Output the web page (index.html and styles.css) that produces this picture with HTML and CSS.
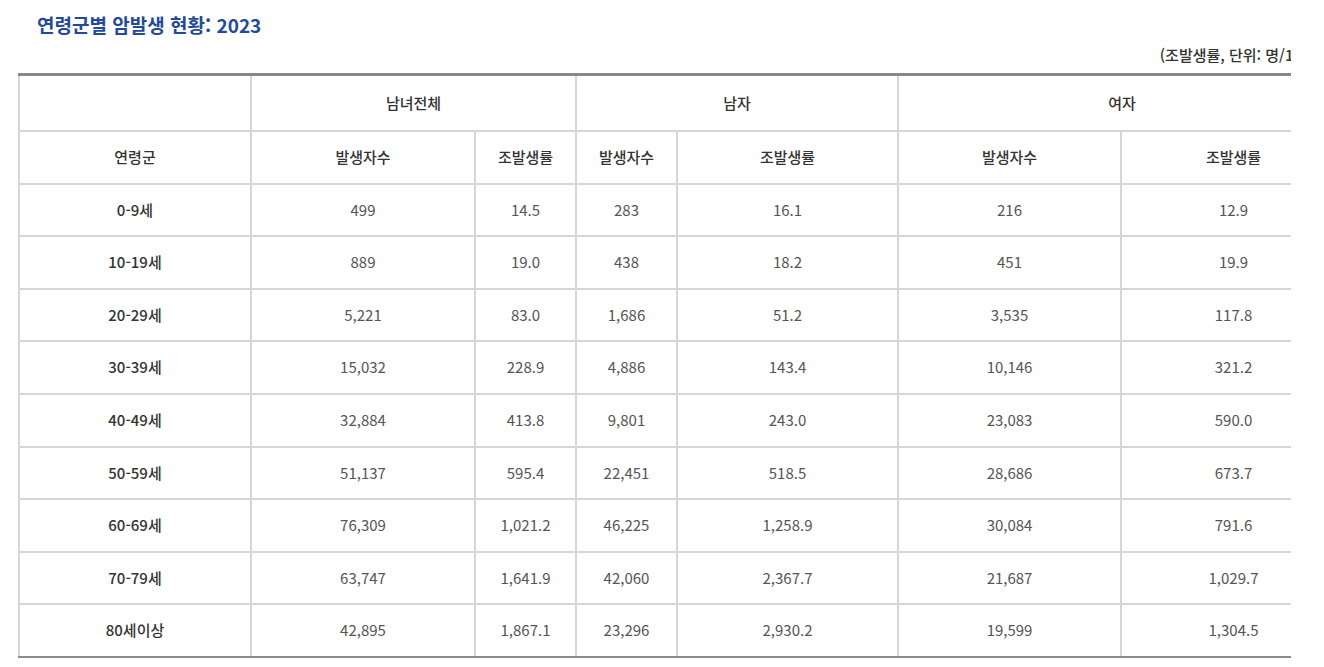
FILE: index.html
```html
<!DOCTYPE html>
<html lang="ko">
<head>
<meta charset="utf-8">
<title>연령군별 암발생 현황: 2023</title>
<link rel="stylesheet" href="styles.css">
</head>
<body>
<div class="frame">
  <div class="inner">
    <h2 class="title">연령군별 암발생 현황: 2023</h2>
    <p class="unit">(조발생률, 단위: 명/10만명)</p>
    <table class="stats">
      <colgroup>
        <col class="c-age"><col class="c-a"><col class="c-b"><col class="c-c"><col class="c-d"><col class="c-e"><col class="c-f">
      </colgroup>
      <thead>
        <tr class="top">
          <th></th>
          <th colspan="2">남녀전체</th>
          <th colspan="2">남자</th>
          <th colspan="2">여자</th>
        </tr>
        <tr>
          <th>연령군</th>
          <th>발생자수</th><th>조발생률</th>
          <th>발생자수</th><th>조발생률</th>
          <th>발생자수</th><th>조발생률</th>
        </tr>
      </thead>
      <tbody>
        <tr><th>0-9세</th><td>499</td><td>14.5</td><td>283</td><td>16.1</td><td>216</td><td>12.9</td></tr>
        <tr><th>10-19세</th><td>889</td><td>19.0</td><td>438</td><td>18.2</td><td>451</td><td>19.9</td></tr>
        <tr><th>20-29세</th><td>5,221</td><td>83.0</td><td>1,686</td><td>51.2</td><td>3,535</td><td>117.8</td></tr>
        <tr><th>30-39세</th><td>15,032</td><td>228.9</td><td>4,886</td><td>143.4</td><td>10,146</td><td>321.2</td></tr>
        <tr><th>40-49세</th><td>32,884</td><td>413.8</td><td>9,801</td><td>243.0</td><td>23,083</td><td>590.0</td></tr>
        <tr><th>50-59세</th><td>51,137</td><td>595.4</td><td>22,451</td><td>518.5</td><td>28,686</td><td>673.7</td></tr>
        <tr><th>60-69세</th><td>76,309</td><td>1,021.2</td><td>46,225</td><td>1,258.9</td><td>30,084</td><td>791.6</td></tr>
        <tr><th>70-79세</th><td>63,747</td><td>1,641.9</td><td>42,060</td><td>2,367.7</td><td>21,687</td><td>1,029.7</td></tr>
        <tr><th>80세이상</th><td>42,895</td><td>1,867.1</td><td>23,296</td><td>2,930.2</td><td>19,599</td><td>1,304.5</td></tr>
      </tbody>
    </table>
  </div>
</div>
</body>
</html>
```
FILE: styles.css
```css
html, body {
  margin: 0;
  padding: 0;
  background: #ffffff;
}
body {
  font-family: "Noto Sans CJK KR", "Noto Sans", sans-serif;
  color: #333333;
}
.frame {
  margin-left: 18px;
  width: 1273px;
  overflow: hidden;
}
.inner {
  width: 1327px;
}
.title {
  margin: 0;
  padding: 11px 0 0 19px;
  height: 27px;
  line-height: 27px;
  font-size: 19px;
  font-weight: 700;
  color: #234a9a;
}
.unit {
  margin: 0;
  padding: 6px 10px 0 0;
  height: 35px;
  line-height: 22px;
  text-align: right;
  font-size: 15px;
  font-weight: 500;
  color: #333333;
  box-sizing: border-box;
}
.stats {
  width: 1327px;
  table-layout: fixed;
  border-collapse: collapse;
  border-top: 3px solid #888888;
  border-bottom: 2px solid #8a8a8a;
}
.c-age { width: 232px; }
.c-a { width: 224px; }
.c-b { width: 101px; }
.c-c { width: 101px; }
.c-d { width: 221px; }
.c-e { width: 223px; }
.c-f { width: 225px; }
.stats th,
.stats td {
  border: 2px solid #d6d6d6;
  padding: 14px 6px;
  line-height: 22.6px;
  font-size: 15px;
  text-align: center;
  white-space: nowrap;
}
.stats thead tr.top th { border-top: 3px solid #888888; }
.stats tbody tr:last-child th,
.stats tbody tr:last-child td { border-bottom: 2px solid #8a8a8a; }
.stats .top th {
  padding-top: 15.7px;
  padding-bottom: 15.7px;
}
.stats th {
  font-weight: 500;
  color: #333333;
}
.stats td {
  font-weight: 400;
  color: #555555;
}
```
